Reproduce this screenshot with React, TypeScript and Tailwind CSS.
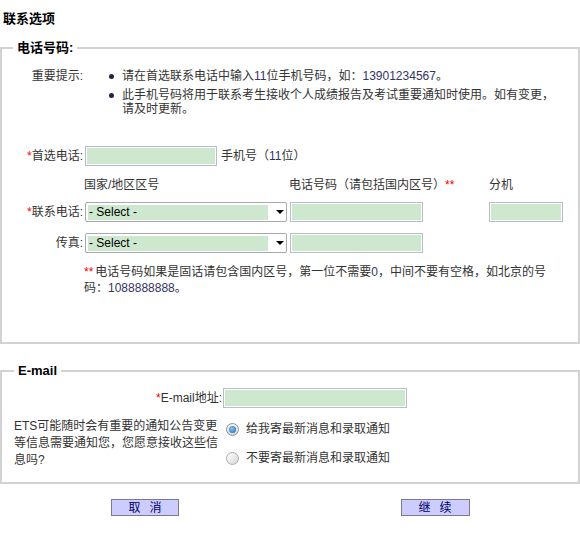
import type { ReactNode } from 'react'

// Shared field look: pale green fill, grey frame with a thin white inner ring.
const fieldCls = 'block h-[20px] shrink-0 border border-[#b8bec8] bg-[#cde8cf] shadow-[inset_0_0_0_1px_#ffffff]'

function Req() {
  return <span className="text-[#ff0000]">*</span>
}

function Num({ children }: { children: ReactNode }) {
  return <span className="text-[#333366]">{children}</span>
}

function FakeSelect() {
  return (
    <div className="flex h-[20px] w-[202px] shrink-0 items-center rounded-[2px] border border-[#a7a9ac] bg-white px-[2px]">
      <span className="flex h-[15px] w-[180px] items-center bg-[#cde8cf] pl-[1px] text-black">- Select -</span>
      <span className="ml-[8px] block h-0 w-0 border-x-[4px] border-t-[4px] border-x-transparent border-t-black" />
    </div>
  )
}

function Radio({ checked }: { checked?: boolean }) {
  return checked ? (
    <span className="flex h-[13px] w-[13px] shrink-0 items-center justify-center rounded-full border border-[#8d8f91] bg-gradient-to-b from-[#f4f4f4] to-[#d8d8d8]">
      <span className="block h-[7px] w-[7px] rounded-full bg-[radial-gradient(circle_at_40%_40%,#7ec8f2,#1d5fa8)]" />
    </span>
  ) : (
    <span className="block h-[13px] w-[13px] shrink-0 rounded-full border border-[#a9abad] bg-gradient-to-br from-[#ffffff] to-[#d6d6d6]" />
  )
}

export default function App() {
  return (
    <div className="h-[542px] w-[580px] bg-white text-[12px] text-[#333333] [font-family:'Liberation_Sans','Noto_Sans_CJK_SC',sans-serif]">
      <h1 className="pl-[3px] pt-[10px] text-[13px] font-bold leading-[18px] text-black">联系选项</h1>

      {/* Phone numbers */}
      <fieldset className="mt-[11px] h-[305px] w-full border-2 border-[#d2d2d2] px-0 pb-0">
        <legend className="ml-[11px] px-[4px] text-[13px] font-bold leading-[18px] text-black">电话号码:</legend>

        <div className="mt-[12px] flex">
          <span className="w-[81px] shrink-0 text-right leading-[14px]">重要提示:</span>
          <ul className="ml-[26px] flex w-[452px] flex-col gap-[5px] leading-[14px]">
            <li className="flex">
              <span className="mr-[8px] mt-[5px] block h-[5px] w-[5px] shrink-0 rounded-full bg-[#222244]" />
              <span>
                请在首选联系电话中输入<Num>11</Num>位手机号码，如：<Num>13901234567</Num>。
              </span>
            </li>
            <li className="flex">
              <span className="mr-[8px] mt-[5px] block h-[5px] w-[5px] shrink-0 rounded-full bg-[#222244]" />
              <span>此手机号码将用于联系考生接收个人成绩报告及考试重要通知时使用。如有变更，请及时更新。</span>
            </li>
          </ul>
        </div>

        <div className="mt-[30px] flex items-center">
          <span className="w-[81px] shrink-0 text-right">
            <Req />首选电话:
          </span>
          <span className={`${fieldCls} ml-[2px] w-[132px]`} />
          <span className="ml-[4px]">
            手机号（<Num>11</Num>位）
          </span>
        </div>

        <div className="mt-[11px] flex leading-[16px]">
          <span className="w-[81px] shrink-0" />
          <span className="ml-[1px] w-[205px] shrink-0">国家/地区区号</span>
          <span className="w-[200px] shrink-0">
            电话号码（请包括国内区号）<span className="text-[#ff0000]">**</span>
          </span>
          <span>分机</span>
        </div>

        <div className="mt-[9px] flex items-center">
          <span className="w-[81px] shrink-0 text-right">
            <Req />联系电话:
          </span>
          <span className="ml-[2px]">
            <FakeSelect />
          </span>
          <span className={`${fieldCls} ml-[3px] w-[133px]`} />
          <span className={`${fieldCls} ml-[66px] w-[74px]`} />
        </div>

        <div className="mt-[11px] flex items-center">
          <span className="w-[81px] shrink-0 text-right">传真:</span>
          <span className="ml-[2px]">
            <FakeSelect />
          </span>
          <span className={`${fieldCls} ml-[3px] w-[133px]`} />
        </div>

        <p className="ml-[82px] mt-[11px] w-[472px] leading-[16px]">
          <span className="mr-[2px] text-[#ff0000]">**</span>
          电话号码如果是固话请包含国内区号，第一位不需要<Num>0</Num>，中间不要有空格，如北京的号码：<Num>1088888888</Num>。
        </p>
      </fieldset>

      {/* E-mail */}
      <fieldset className="mt-[18px] h-[122px] w-full border-2 border-[#d2d2d2] px-0 pb-0">
        <legend className="ml-[12px] px-[4px] text-[13px] font-bold leading-[18px] text-black">E-mail</legend>

        <div className="mt-[8px] flex items-center">
          <span className="w-[220px] shrink-0 text-right">
            <Req />E-mail地址:
          </span>
          <span className={`${fieldCls} ml-[1px] w-[184px]`} />
        </div>

        <div className="mt-[10px] flex">
          <p className="w-[220px] shrink-0 pl-[12px] pr-[3px] leading-[17px]">
            ETS可能随时会有重要的通知公告变更等信息需要通知您，您愿意接收这些信息吗?
          </p>
          <div className="flex flex-col gap-[7px]">
            <label className="flex h-[22px] items-center">
              <span className="ml-[4px]">
                <Radio checked />
              </span>
              <span className="ml-[7px]">给我寄最新消息和录取通知</span>
            </label>
            <label className="flex h-[22px] items-center">
              <span className="ml-[4px]">
                <Radio />
              </span>
              <span className="ml-[7px]">不要寄最新消息和录取通知</span>
            </label>
          </div>
        </div>
      </fieldset>

      <div className="mt-[15px] grid grid-cols-2">
        <div className="flex justify-center">
          <button className="flex h-[17px] w-[68px] items-center justify-center gap-[9px] border border-[#7a7a8a] bg-[#ccccff] text-[#000066]">
            <span>取</span>
            <span>消</span>
          </button>
        </div>
        <div className="flex justify-center">
          <button className="flex h-[17px] w-[69px] items-center justify-center gap-[9px] border border-[#7a7a8a] bg-[#ccccff] text-[#000066]">
            <span>继</span>
            <span>续</span>
          </button>
        </div>
      </div>
    </div>
  )
}
